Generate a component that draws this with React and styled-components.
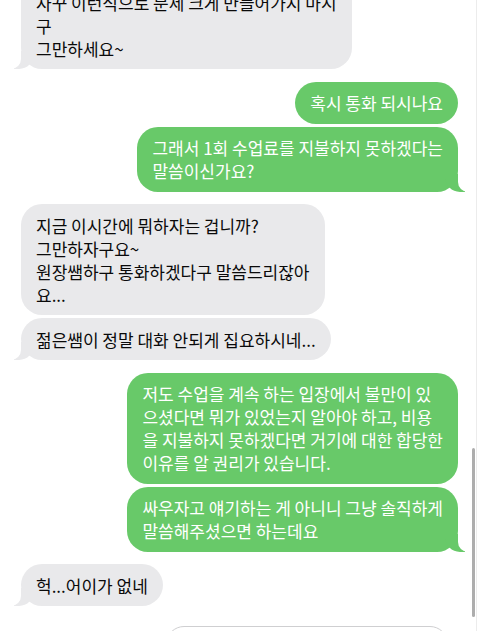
import React from "react";
import styled, { createGlobalStyle, css } from "styled-components";

const messages = [
  { mine: false, tail: true, lines: ["자꾸 이런식으로 문제 크게 만들어가지 마시", "구", "그만하세요~"] },
  { mine: true, tail: false, lines: ["혹시 통화 되시나요"] },
  { mine: true, tail: true, lines: ["그래서 1회 수업료를 지불하지 못하겠다는", "말씀이신가요?"] },
  {
    mine: false,
    tail: false,
    lines: ["지금 이시간에 뭐하자는 겁니까?", "그만하자구요~", "원장쌤하구 통화하겠다구 말씀드리잖아", "요..."],
  },
  { mine: false, tail: true, lines: ["젊은쌤이 정말 대화 안되게 집요하시네..."] },
  {
    mine: true,
    tail: false,
    lines: [
      "저도 수업을 계속 하는 입장에서 불만이 있",
      "으셨다면 뭐가 있었는지 알아야 하고, 비용",
      "을 지불하지 못하겠다면 거기에 대한 합당한",
      "이유를 알 권리가 있습니다.",
    ],
  },
  { mine: true, tail: true, lines: ["싸우자고 얘기하는 게 아니니 그냥 솔직하게", "말씀해주셨으면 하는데요"] },
  { mine: false, tail: true, lines: ["헉...어이가 없네"] },
];

function App() {
  return (
    <>
      <GlobalStyle />
      <Screen>
        <Thread>
          {messages.map((m, i) => {
            const prev = messages[i - 1];
            const sameGroup = prev && prev.mine === m.mine;
            return (
              <Bubble key={i} $mine={m.mine} $tail={m.tail} $tight={sameGroup} $first={i === 0}>
                {m.lines.map((line, j) => (
                  <React.Fragment key={j}>
                    {j > 0 && <br />}
                    {line}
                  </React.Fragment>
                ))}
              </Bubble>
            );
          })}
          <Preview />
        </Thread>
        <ScrollTrack />
        <ScrollThumb />
      </Screen>
    </>
  );
}

const GlobalStyle = createGlobalStyle`
  html, body {
    margin: 0;
    padding: 0;
    background: #fff;
  }
  body {
    font-family: "Noto Sans CJK KR", "Noto Sans", sans-serif;
  }
`;

const Screen = styled.div`
  position: relative;
  width: 480px;
  height: 631px;
  overflow: hidden;
  background: #fff;
`;

const Thread = styled.div`
  display: flex;
  flex-direction: column;
  margin-top: -19px;
  padding: 0 22px 0 21px;
`;

const gray = "#e9e9eb";
const green = "#68c969";

const Bubble = styled.div`
  position: relative;
  max-width: 360px;
  padding: 9.5px 15px;
  border-radius: 21px;
  font-size: 17px;
  line-height: 23px;
  letter-spacing: 0;
  white-space: nowrap;
  margin-top: ${(p) => (p.$first ? "0" : p.$tight ? "3px" : "12.5px")};
  align-self: ${(p) => (p.$mine ? "flex-end" : "flex-start")};
  background: ${(p) => (p.$mine ? green : gray)};
  color: ${(p) => (p.$mine ? "#fff" : "#0a0a0a")};

  ${(p) =>
    p.$tail &&
    css`
      &::before {
        content: "";
        position: absolute;
        bottom: 0;
        ${p.$mine ? "right: -7px;" : "left: -7px;"}
        width: 20px;
        height: 18px;
        background: ${p.$mine ? green : gray};
        ${p.$mine ? "border-bottom-left-radius: 15px;" : "border-bottom-right-radius: 15px;"}
      }
      &::after {
        content: "";
        position: absolute;
        bottom: 0;
        ${p.$mine ? "right: -10px;" : "left: -10px;"}
        width: 10px;
        height: 19px;
        background: #fff;
        ${p.$mine ? "border-bottom-left-radius: 10px;" : "border-bottom-right-radius: 10px;"}
      }
    `}
`;

const Preview = styled.div`
  align-self: flex-end;
  margin: 20px 10px 0 0;
  width: 280px;
  height: 60px;
  border: 1.5px solid #cfcfd1;
  border-radius: 18px;
`;

const ScrollTrack = styled.div`
  position: absolute;
  top: 0;
  right: 3px;
  width: 1px;
  height: 100%;
  background: #ececec;
`;

const ScrollThumb = styled.div`
  position: absolute;
  top: 448px;
  right: 5px;
  width: 3px;
  height: 169px;
  border-radius: 2px;
  background: #adadad;
`;

export default App;
